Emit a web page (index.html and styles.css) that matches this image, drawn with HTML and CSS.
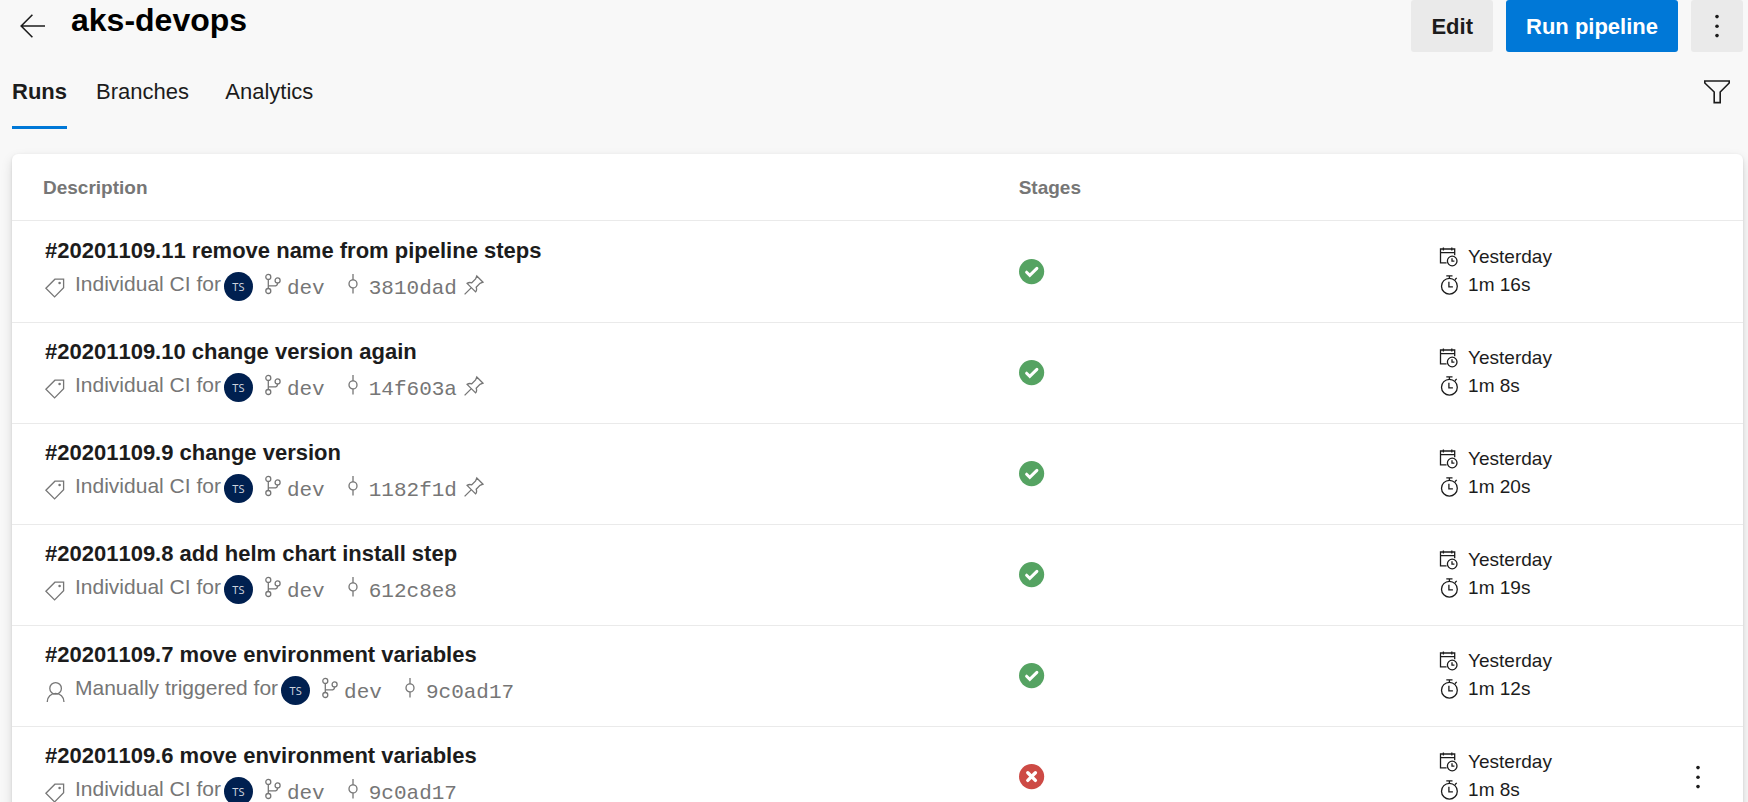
FILE: index.html
```html
<!DOCTYPE html>
<html lang="en">
<head>
<meta charset="utf-8">
<title>aks-devops - Pipelines</title>
<link rel="stylesheet" href="styles.css">
</head>
<body>
<svg class="sprite" aria-hidden="true">
  <symbol id="i-tag" viewBox="0 0 20 20"><path d="M.9 10.2 9.9 1.2H18.6V9.8L9.6 18.9Z"/><circle class="dot" cx="14.6" cy="5" r="1.3"/></symbol>
  <symbol id="i-person" viewBox="0 0 20 20"><circle cx="10.6" cy="6.4" r="5.8"/><path d="M2.3 20V19.6A8.3 8.3 0 0 1 18.9 19.6V20"/></symbol>
  <symbol id="i-branch" viewBox="0 0 16 20"><circle cx="3.3" cy="2.9" r="2.5"/><circle cx="3.3" cy="17" r="2.5"/><circle cx="12.6" cy="6.4" r="2.5"/><path d="M3.3 5.4V14.5M3.3 11.9H9.2Q12.6 11.9 12.6 8.9"/></symbol>
  <symbol id="i-commit" viewBox="0 0 10 20"><circle cx="5" cy="9.9" r="4"/><path d="M5 0V5.9M5 13.9V19.4"/></symbol>
  <symbol id="i-pin" viewBox="0 0 20 20"><path d="M12.8 1 19 7.2 16 8.4 12.2 12.2C13 14.4 12.5 15.9 11.6 16.9L3.1 8.4C4.5 7.4 5.8 7.2 7.8 7.8L11.6 4ZM7.4 12.6.6 19.4"/></symbol>
  <symbol id="i-date" viewBox="0 0 20 20"><path d="M8.6 15.8H2.5V2H16.7V8.2M2.5 5.7H16.7M5.4.4V3.4M13.8.4V3.4"/><circle cx="14.2" cy="14" r="4.8"/><path d="M14 11.2V14.2H16.4"/></symbol>
  <symbol id="i-clock" viewBox="0 0 20 20"><circle cx="11.4" cy="11.2" r="7.9"/><path d="M11.4 3.3V.9M8.3.9H14.5M16.9 4.7 18.7 2.9M10.9 6.8V11.9H14.9"/></symbol>
  <symbol id="i-ok" viewBox="0 0 26 26"><circle cx="12.6" cy="12.6" r="12.6" fill="#55a362"/><path d="M7.6 13.2 10.8 16.4 17.9 9.4" fill="none" stroke="#fff" stroke-width="3" stroke-linecap="round" stroke-linejoin="miter"/></symbol>
  <symbol id="i-fail" viewBox="0 0 26 26"><circle cx="12.6" cy="12.6" r="12.6" fill="#cd4a45"/><path d="M8.8 8.8 16.4 16.4M16.4 8.8 8.8 16.4" fill="none" stroke="#fff" stroke-width="3.4" stroke-linecap="round"/></symbol>
  <symbol id="i-dots" viewBox="0 0 24 24"><circle class="dot" cx="12" cy="2.6" r="1.8"/><circle class="dot" cx="12" cy="12.2" r="1.8"/><circle class="dot" cx="12" cy="21.6" r="1.8"/></symbol>
</svg>

<header class="header">
  <a class="back" href="#" aria-label="Back"><svg width="26" height="24" viewBox="0 0 26 24"><path d="M25 12H1M12.4 .8 1.2 12 12.4 23.2"/></svg></a>
  <h1 class="title">aks-devops</h1>
  <div class="actions">
    <button class="btn" type="button">Edit</button>
    <button class="btn btn-primary" type="button">Run pipeline</button>
    <button class="btn btn-icon" type="button" aria-label="More actions"><svg width="24" height="24"><use href="#i-dots"/></svg></button>
  </div>
</header>

<nav class="tabs">
  <a class="tab tab-active" href="#" data-label="Runs">Runs</a>
  <a class="tab" href="#" data-label="Branches">Branches</a>
  <a class="tab" href="#" data-label="Analytics">Analytics</a>
  <button class="filter" type="button" aria-label="Filter"><svg width="26" height="24" viewBox="0 0 26 24"><path d="M.8 1H25.2V3L16.2 12V22.6H10.2V12L.8 3Z"/></svg></button>
</nav>

<main class="card">
  <table class="runs">
    <thead>
      <tr><th class="col-desc" scope="col">Description</th><th class="col-stages" scope="col">Stages</th><th class="col-time" scope="col"></th><th class="col-more" scope="col"></th></tr>
    </thead>
    <tbody>
      <tr>
        <td class="col-desc">
          <a class="run-name" href="#">#20201109.11 remove name from pipeline steps</a>
          <div class="meta"><svg class="trigger-icon"><use href="#i-tag"/></svg><span class="trigger">Individual CI for</span><span class="avatar">TS</span><svg class="branch-icon"><use href="#i-branch"/></svg><span class="ref branch">dev</span><svg class="commit-icon"><use href="#i-commit"/></svg><span class="ref">3810dad</span><svg class="pin-icon"><use href="#i-pin"/></svg></div>
        </td>
        <td class="col-stages"><svg class="status" role="img" aria-label="Succeeded"><use href="#i-ok"/></svg></td>
        <td class="col-time"><div class="time"><svg><use href="#i-date"/></svg>Yesterday</div><div class="time"><svg><use href="#i-clock"/></svg>1m 16s</div></td>
        <td class="col-more"></td>
      </tr>
      <tr>
        <td class="col-desc">
          <a class="run-name" href="#">#20201109.10 change version again</a>
          <div class="meta"><svg class="trigger-icon"><use href="#i-tag"/></svg><span class="trigger">Individual CI for</span><span class="avatar">TS</span><svg class="branch-icon"><use href="#i-branch"/></svg><span class="ref branch">dev</span><svg class="commit-icon"><use href="#i-commit"/></svg><span class="ref">14f603a</span><svg class="pin-icon"><use href="#i-pin"/></svg></div>
        </td>
        <td class="col-stages"><svg class="status" role="img" aria-label="Succeeded"><use href="#i-ok"/></svg></td>
        <td class="col-time"><div class="time"><svg><use href="#i-date"/></svg>Yesterday</div><div class="time"><svg><use href="#i-clock"/></svg>1m 8s</div></td>
        <td class="col-more"></td>
      </tr>
      <tr>
        <td class="col-desc">
          <a class="run-name" href="#">#20201109.9 change version</a>
          <div class="meta"><svg class="trigger-icon"><use href="#i-tag"/></svg><span class="trigger">Individual CI for</span><span class="avatar">TS</span><svg class="branch-icon"><use href="#i-branch"/></svg><span class="ref branch">dev</span><svg class="commit-icon"><use href="#i-commit"/></svg><span class="ref">1182f1d</span><svg class="pin-icon"><use href="#i-pin"/></svg></div>
        </td>
        <td class="col-stages"><svg class="status" role="img" aria-label="Succeeded"><use href="#i-ok"/></svg></td>
        <td class="col-time"><div class="time"><svg><use href="#i-date"/></svg>Yesterday</div><div class="time"><svg><use href="#i-clock"/></svg>1m 20s</div></td>
        <td class="col-more"></td>
      </tr>
      <tr>
        <td class="col-desc">
          <a class="run-name" href="#">#20201109.8 add helm chart install step</a>
          <div class="meta"><svg class="trigger-icon"><use href="#i-tag"/></svg><span class="trigger">Individual CI for</span><span class="avatar">TS</span><svg class="branch-icon"><use href="#i-branch"/></svg><span class="ref branch">dev</span><svg class="commit-icon"><use href="#i-commit"/></svg><span class="ref">612c8e8</span></div>
        </td>
        <td class="col-stages"><svg class="status" role="img" aria-label="Succeeded"><use href="#i-ok"/></svg></td>
        <td class="col-time"><div class="time"><svg><use href="#i-date"/></svg>Yesterday</div><div class="time"><svg><use href="#i-clock"/></svg>1m 19s</div></td>
        <td class="col-more"></td>
      </tr>
      <tr>
        <td class="col-desc">
          <a class="run-name" href="#">#20201109.7 move environment variables</a>
          <div class="meta"><svg class="trigger-icon"><use href="#i-person"/></svg><span class="trigger">Manually triggered for</span><span class="avatar">TS</span><svg class="branch-icon"><use href="#i-branch"/></svg><span class="ref branch">dev</span><svg class="commit-icon"><use href="#i-commit"/></svg><span class="ref">9c0ad17</span></div>
        </td>
        <td class="col-stages"><svg class="status" role="img" aria-label="Succeeded"><use href="#i-ok"/></svg></td>
        <td class="col-time"><div class="time"><svg><use href="#i-date"/></svg>Yesterday</div><div class="time"><svg><use href="#i-clock"/></svg>1m 12s</div></td>
        <td class="col-more"></td>
      </tr>
      <tr>
        <td class="col-desc">
          <a class="run-name" href="#">#20201109.6 move environment variables</a>
          <div class="meta"><svg class="trigger-icon"><use href="#i-tag"/></svg><span class="trigger">Individual CI for</span><span class="avatar">TS</span><svg class="branch-icon"><use href="#i-branch"/></svg><span class="ref branch">dev</span><svg class="commit-icon"><use href="#i-commit"/></svg><span class="ref">9c0ad17</span></div>
        </td>
        <td class="col-stages"><svg class="status" role="img" aria-label="Failed"><use href="#i-fail"/></svg></td>
        <td class="col-time"><div class="time"><svg><use href="#i-date"/></svg>Yesterday</div><div class="time"><svg><use href="#i-clock"/></svg>1m 8s</div></td>
        <td class="col-more"><button class="row-more" type="button" aria-label="More options"><svg width="24" height="24"><use href="#i-dots"/></svg></button></td>
      </tr>
    </tbody>
  </table>
</main>
</body>
</html>
```

FILE: styles.css
```css
* { box-sizing: border-box; }

body {
  margin: 0;
  height: 100vh;
  overflow: hidden;
  padding: 0 5px 0 12px;
  background: #f8f8f8;
  color: #1c1c1c;
  font: 22px/28px "Liberation Sans", Arial, sans-serif;
}

a { color: inherit; text-decoration: none; }
button { border: 0; background: none; color: inherit; font: inherit; cursor: pointer; }
svg { display: block; flex: none; fill: none; stroke: currentColor; stroke-width: 1.3; }
.sprite { position: absolute; width: 0; height: 0; }
.dot { fill: currentColor; stroke: none; }

.header { display: flex; align-items: flex-start; }
.back { display: flex; align-items: center; width: 59px; height: 52px; padding-left: 8px; }
.back svg { stroke-width: 1.6; }
.title { margin: 0; font-size: 32px; line-height: 40px; color: #000; }
.actions { display: flex; gap: 13px; margin-left: auto; }
.btn {
  display: flex;
  align-items: center;
  justify-content: center;
  height: 52px;
  padding: 2px 20px 0;
  border-radius: 3px;
  background: #eaeaea;
  font-weight: bold;
}
.btn-primary { background: #0078d7; color: #fff; }
.btn-icon { width: 52px; padding: 0; }

.tabs { display: flex; gap: 29px; height: 77px; }
.tab { padding: 26px 0 20px; border-bottom: 3px solid transparent; }
.tab::after { content: attr(data-label); display: block; height: 0; overflow: hidden; font-weight: bold; visibility: hidden; }
.tab-active { border-color: #0078d7; font-weight: bold; }
.filter { display: flex; margin: 28px 13px 0 auto; padding: 0; height: 24px; }
.filter svg { stroke-width: 1.6; }

.card {
  margin-top: 25px;
  border-radius: 6px;
  background: #fff;
  box-shadow: 0 5px 12px rgba(0, 0, 0, .13), 0 1px 3px rgba(0, 0, 0, .1);
}
.runs { width: 100%; table-layout: fixed; border-spacing: 0; }
.runs th {
  height: 67px;
  padding: 2px 0 0;
  border-bottom: 1px solid #eaeaea;
  color: #767676;
  font-size: 19px;
  line-height: 24px;
  text-align: left;
}
.runs td { height: 101px; padding: 0; border-bottom: 1px solid #eaeaea; vertical-align: middle; }
.runs tbody tr:first-child td { border-top: 1px solid #fff; height: 102px; }
.runs .col-desc { width: 57%; padding-left: 31px; }
.runs .col-stages { width: 24%; padding-left: 20px; }
.runs .col-time { padding-left: 24px; padding-bottom: 2px; }
.runs .col-more { width: 90px; }

.runs td.col-desc { padding: 15px 0 21px 33px; }
.run-name { display: block; font-weight: bold; font-kerning: none; }
.meta {
  display: flex;
  height: 29px;
  margin-top: 7px;
  color: #767676;
  font-size: 21px;
  line-height: 24px;
}
.trigger-icon { width: 20px; height: 26px; align-self: flex-end; }
.trigger { margin: 0 3px 0 10px; }
.avatar {
  width: 29px;
  height: 29px;
  border-radius: 50%;
  background: #002050;
  color: #ccd2dc;
  font: 11px/29px "Noto Sans", sans-serif;
  text-align: center;
}
.branch-icon { width: 16px; height: 24px; margin: 0 6px 0 12px; }
.ref { align-self: flex-end; font-family: "Liberation Mono", monospace; }
.commit-icon { width: 10px; height: 24px; margin: 0 11px 0 23px; }
.pin-icon { width: 20px; height: 26px; margin-left: 7px; }

.status { width: 26px; height: 26px; stroke: none; }
.time { display: flex; align-items: center; font-size: 19px; }
.time svg { width: 20px; height: 20px; margin-right: 10px; }
.row-more { display: flex; margin-left: 33px; padding: 0; }
```
